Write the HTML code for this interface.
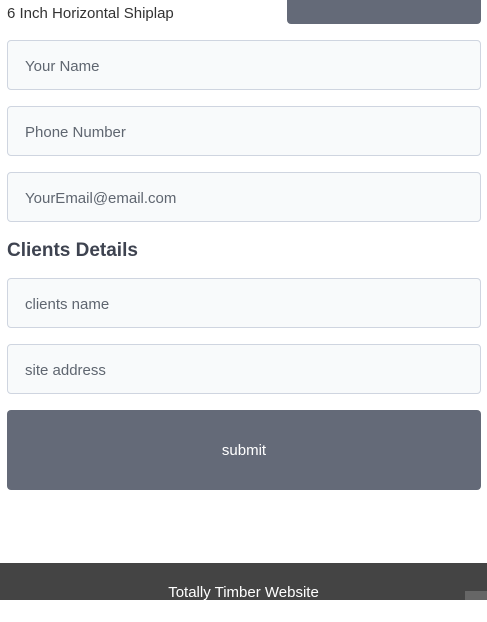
<!DOCTYPE html>
<html><head><style>
body{margin:0;width:487px;height:600px;overflow:hidden;background:#fff;font-family:"Liberation Sans",sans-serif;position:relative}
.t{position:absolute;left:7px;top:5px;font-size:15px;color:#333}
.tb{position:absolute;left:287px;top:0;width:194px;height:24px;background:#646a78;border-radius:0 0 4px 4px}
.in{position:absolute;left:7px;width:474px;height:50px;border:1px solid #cfd5e0;border-radius:4px;background:#f8fafb;box-sizing:border-box;padding-left:17px;line-height:51px;font-size:15px;color:#5f6670}
h3{position:absolute;left:7px;top:240px;margin:0;font-size:19px;font-weight:bold;color:#3e4350}
.btn{position:absolute;left:7px;top:410px;width:474px;height:80px;background:#646a78;border-radius:4px;color:#fff;font-size:15px;text-align:center;line-height:81px}
.f{position:absolute;left:0;top:563px;width:487px;height:37px;background:#444;color:#fff;font-size:15px;text-align:center;line-height:59px}
.sm{position:absolute;left:465px;top:591px;width:22px;height:9px;background:#666;}
</style></head><body>
<div class="t">6 Inch Horizontal Shiplap</div>
<div class="tb"></div>
<div class="in" style="top:40px">Your Name</div>
<div class="in" style="top:106px">Phone Number</div>
<div class="in" style="top:172px">YourEmail@email.com</div>
<h3>Clients Details</h3>
<div class="in" style="top:278px">clients name</div>
<div class="in" style="top:344px">site address</div>
<div class="btn">submit</div>
<div class="f">Totally Timber Website</div>
<div class="sm"></div>
</body></html>
